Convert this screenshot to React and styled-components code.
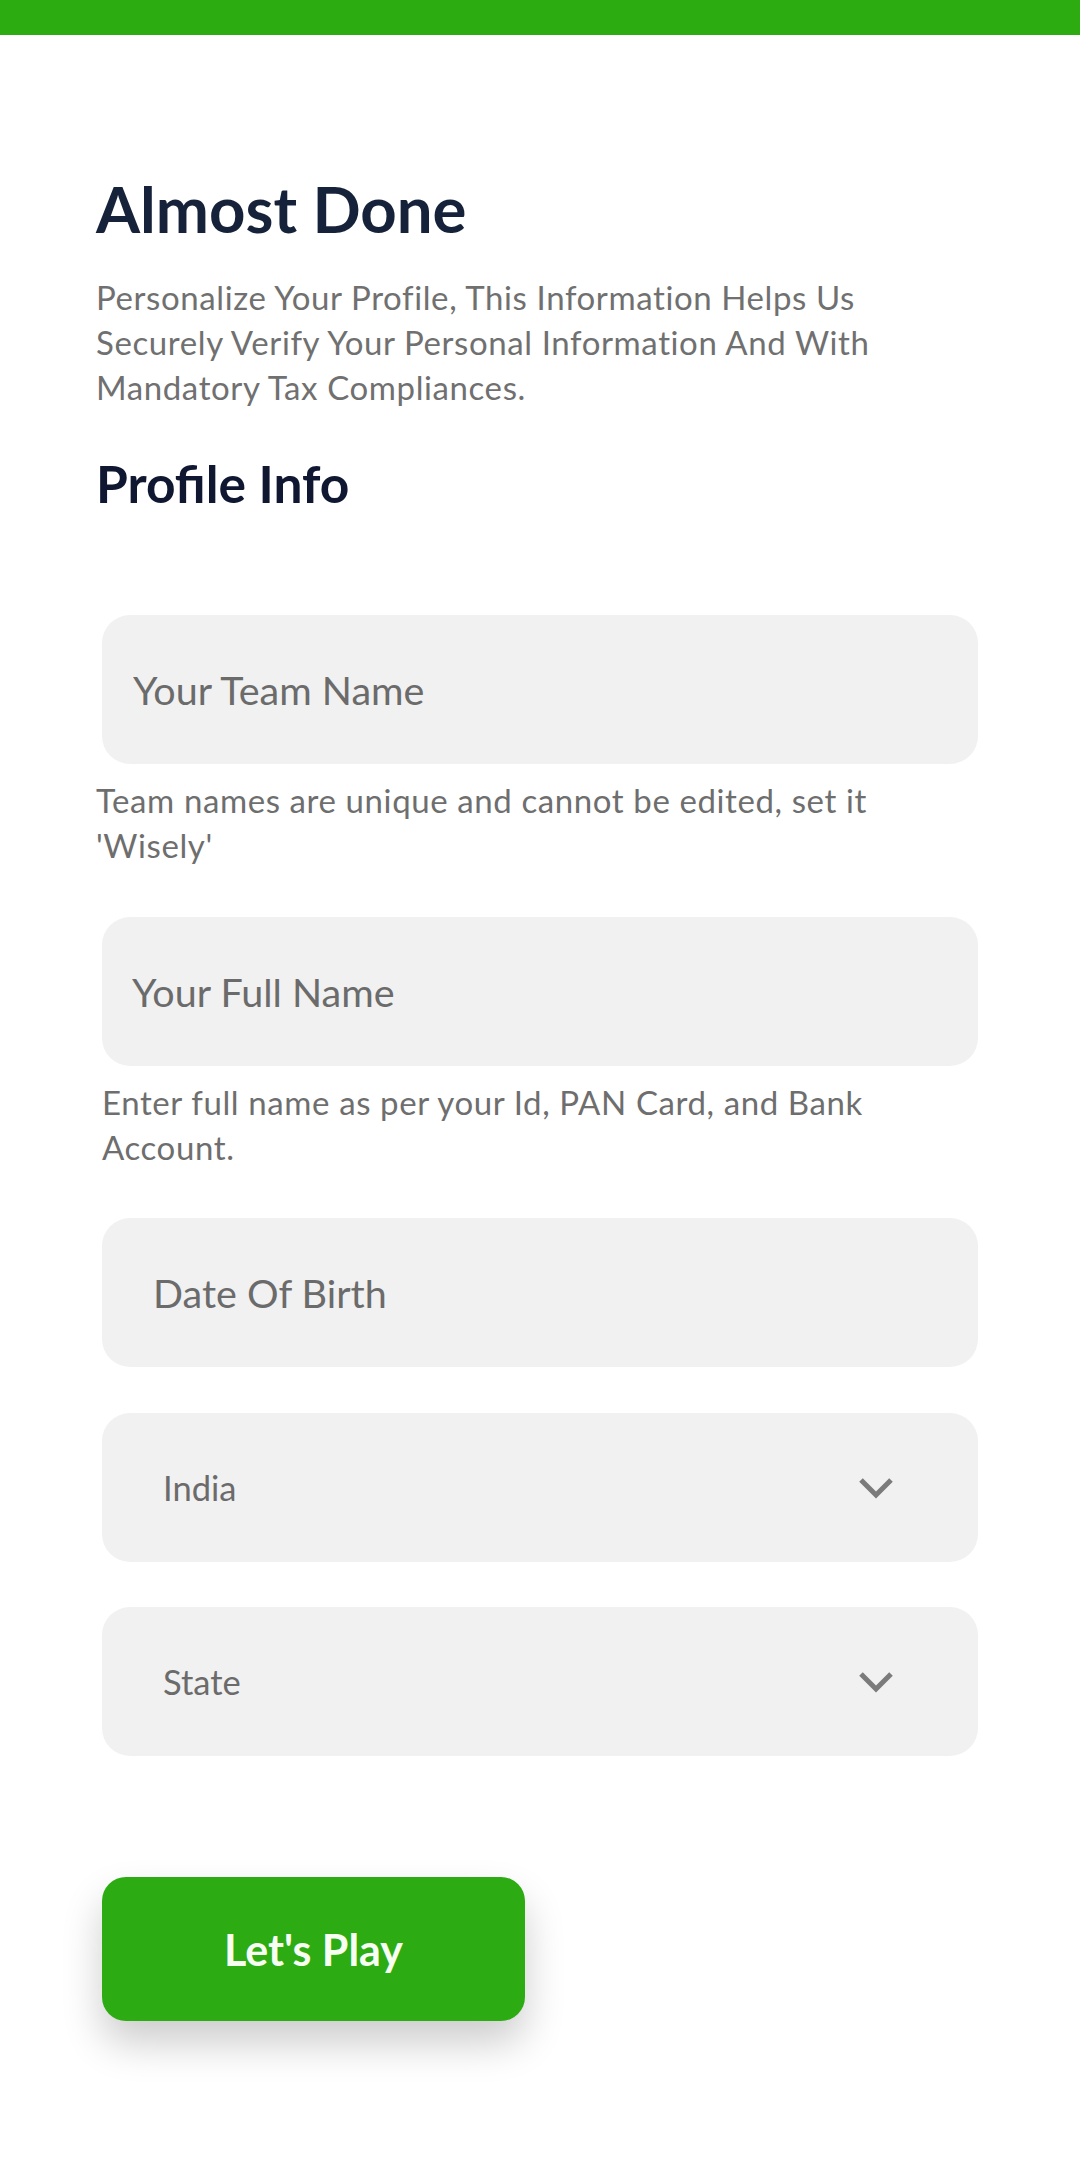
import React from "react";
import styled, { createGlobalStyle } from "styled-components";

const GlobalStyle = createGlobalStyle`
  body {
    margin: 0;
    background: #fff;
    font-family: Lato, "Noto Sans", sans-serif;
  }
`;

const Page = styled.div`
  width: 1080px;
  min-height: 2160px;
  background: #fff;
`;

const TopBar = styled.div`
  height: 35px;
  background-color: #2dac12;
`;

const Content = styled.main`
  padding: 136px 102px 0 96px;
  display: flex;
  flex-direction: column;
`;

const Title = styled.h1`
  margin: 0;
  font-size: 63.5px;
  line-height: 1.2;
  font-weight: 700;
  color: #16213a;
`;

const Intro = styled.p`
  margin: 28px 0 0;
  max-width: 840px;
  font-size: 33px;
  letter-spacing: 0.6px;
  line-height: 45px;
  color: #707070;
`;

const Subtitle = styled.h2`
  margin: 43px 0 0;
  font-size: 51.5px;
  line-height: 60px;
  font-weight: 700;
  color: #0f1731;
`;

const Form = styled.form`
  margin-top: 102px;
  display: flex;
  flex-direction: column;
`;

const Field = styled.input`
  box-sizing: border-box;
  width: 876px;
  height: 149px;
  margin-left: 6px;
  padding: 0 0 0 ${(p) => p.$indent}px;
  border: none;
  outline: none;
  border-radius: 28px;
  background: #f1f1f1;
  font-family: inherit;
  font-size: 39.5px;
  color: #333;
  &::placeholder {
    color: #6b6b6b;
  }
`;

const Hint = styled.p`
  margin: 14px 0 48.5px ${(p) => (p.$inset ? 6 : 0)}px;
  max-width: 860px;
  font-size: 33px;
  letter-spacing: 0.6px;
  line-height: 45px;
  color: #6e6e6e;
`;

const Select = styled.div`
  box-sizing: border-box;
  width: 876px;
  height: 149px;
  margin: ${(p) => (p.$first ? 46 : 45)}px 0 0 6px;
  padding: 0 84px 0 61px;
  border-radius: 28px;
  background: #f1f1f1;
  display: flex;
  align-items: center;
  justify-content: space-between;
  font-size: 34.5px;
  color: #6b6b6b;
  cursor: pointer;
`;

const Chevron = () => (
  <svg width="36" height="22" viewBox="0 0 36 22">
    <polyline
      points="3,3 18,18 33,3"
      fill="none"
      stroke="#7b7b7b"
      strokeWidth="5"
    />
  </svg>
);

const PlayButton = styled.button`
  width: 423px;
  height: 144px;
  margin: 121px 0 0 6px;
  border: none;
  border-radius: 24px;
  background-color: #2dab12;
  color: #f6fff2;
  font-family: inherit;
  font-size: 43px;
  font-weight: 700;
  box-shadow: 0 22px 40px rgba(0, 0, 0, 0.2);
  cursor: pointer;
`;

export default function App() {
  return (
    <Page>
      <GlobalStyle />
      <TopBar />
      <Content>
        <Title>Almost Done</Title>
        <Intro>
          Personalize Your Profile, This Information Helps Us Securely Verify
          Your Personal Information And With Mandatory Tax Compliances.
        </Intro>
        <Subtitle>Profile Info</Subtitle>
        <Form onSubmit={(e) => e.preventDefault()}>
          <Field $indent={31} placeholder="Your Team Name" />
          <Hint>
            Team names are unique and cannot be edited, set it 'Wisely'
          </Hint>
          <Field $indent={30} placeholder="Your Full Name" />
          <Hint $inset>
            Enter full name as per your Id, PAN Card, and Bank Account.
          </Hint>
          <Field $indent={51} placeholder="Date Of Birth" />
          <Select $first>
            <span>India</span>
            <Chevron />
          </Select>
          <Select>
            <span>State</span>
            <Chevron />
          </Select>
          <div>
            <PlayButton type="submit">Let's Play</PlayButton>
          </div>
        </Form>
      </Content>
    </Page>
  );
}
